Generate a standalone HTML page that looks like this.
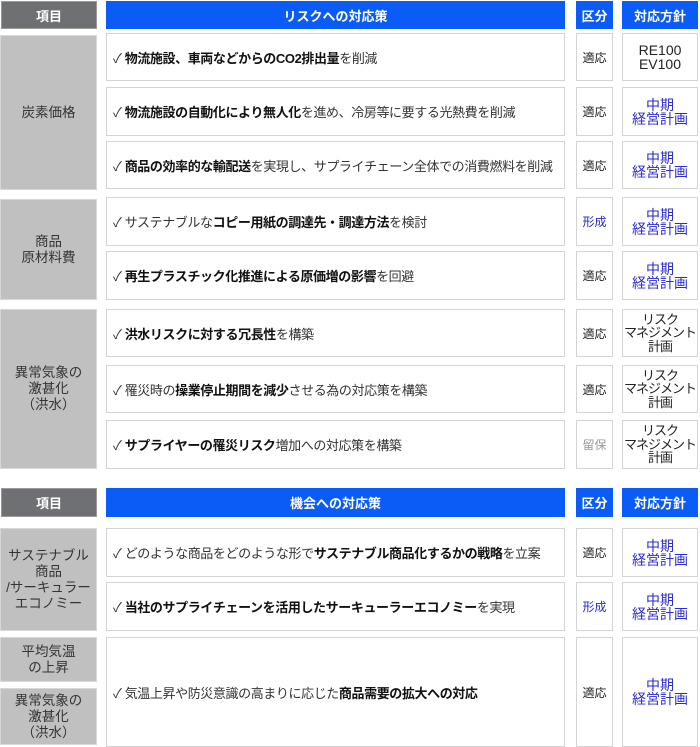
<!DOCTYPE html>
<html><head><meta charset="utf-8"><style>
body{margin:0;width:700px;height:745px;background:#fff;position:relative;overflow:hidden;font-family:"Liberation Sans","Noto Sans CJK JP",sans-serif;}
.b{position:absolute;box-sizing:border-box;display:flex;align-items:center;justify-content:center;text-align:center;}
.hg{background:#6f7073;color:#fff;font-weight:bold;font-size:13px;border:1px solid #9a9a9a;}
.hb{background:#0b5cf7;color:#fff;font-weight:bold;font-size:13px;}
.lg{background:#c0c0c0;border:1px solid #d8d8d8;color:#333;font-size:13.5px;line-height:16px;}
.w{background:#fff;border:1.5px solid #d4d4d4;font-size:13px;color:#333;}
.t{justify-content:flex-start;text-align:left;padding-left:6px;white-space:nowrap;letter-spacing:-0.4px;}
.t b{color:#111;}
.s{font-size:12px;color:#222;}
.p{font-size:14px;line-height:14px;color:#222;white-space:nowrap;}
.r{font-size:13px;line-height:13.5px;letter-spacing:-1px;}
.bl{color:#2a2ad0;}
.gr{color:#999;}
</style></head><body>
<div class="b hg" style="left:1px;top:1px;width:96px;height:28px">項目</div>
<div class="b hb" style="left:106px;top:1px;width:459px;height:28px">リスクへの対応策</div>
<div class="b hb" style="left:576px;top:1px;width:37px;height:28px">区分</div>
<div class="b hb" style="left:622px;top:1px;width:76px;height:28px">対応方針</div>

<div class="b lg" style="left:0;top:35px;width:97px;height:155px">炭素価格</div>
<div class="b w t" style="left:106px;top:33px;width:459px;height:48px">✓&nbsp;<b>物流施設、車両などからのCO2排出量</b>を削減</div>
<div class="b w t" style="left:106px;top:87px;width:459px;height:49px">✓&nbsp;<b>物流施設の自動化により無人化</b>を進め、冷房等に要する光熱費を削減</div>
<div class="b w t" style="left:106px;top:141px;width:459px;height:48px">✓&nbsp;<b>商品の効率的な輸配送</b>を実現し、サプライチェーン全体での消費燃料を削減</div>
<div class="b w s" style="left:576px;top:33px;width:37px;height:48px">適応</div>
<div class="b w s" style="left:576px;top:87px;width:37px;height:49px">適応</div>
<div class="b w s" style="left:576px;top:141px;width:37px;height:48px">適応</div>
<div class="b w p" style="left:622px;top:33px;width:76px;height:48px">RE100<br>EV100</div>
<div class="b w p bl" style="left:622px;top:87px;width:76px;height:49px">中期<br>経営計画</div>
<div class="b w p bl" style="left:622px;top:141px;width:76px;height:48px">中期<br>経営計画</div>

<div class="b lg" style="left:0;top:199px;width:97px;height:101px">商品<br>原材料費</div>
<div class="b w t" style="left:106px;top:197px;width:459px;height:49px">✓&nbsp;サステナブルな<b>コピー用紙の調達先・調達方法</b>を検討</div>
<div class="b w t" style="left:106px;top:251px;width:459px;height:49px">✓&nbsp;<b>再生プラスチック化推進による原価増の影響</b>を回避</div>
<div class="b w s bl" style="left:576px;top:197px;width:37px;height:49px">形成</div>
<div class="b w s" style="left:576px;top:251px;width:37px;height:49px">適応</div>
<div class="b w p bl" style="left:622px;top:197px;width:76px;height:49px">中期<br>経営計画</div>
<div class="b w p bl" style="left:622px;top:251px;width:76px;height:49px">中期<br>経営計画</div>

<div class="b lg" style="left:0;top:309px;width:97px;height:160px">異常気象の<br>激甚化<br>（洪水）</div>
<div class="b w t" style="left:106px;top:309px;width:459px;height:48px">✓&nbsp;<b>洪水リスクに対する冗長性</b>を構築</div>
<div class="b w t" style="left:106px;top:365px;width:459px;height:48px">✓&nbsp;罹災時の<b>操業停止期間を減少</b>させる為の対応策を構築</div>
<div class="b w t" style="left:106px;top:420px;width:459px;height:49px">✓&nbsp;<b>サプライヤーの罹災リスク</b>増加への対応策を構築</div>
<div class="b w s" style="left:576px;top:309px;width:37px;height:48px">適応</div>
<div class="b w s" style="left:576px;top:365px;width:37px;height:48px">適応</div>
<div class="b w s gr" style="left:576px;top:420px;width:37px;height:49px">留保</div>
<div class="b w p r" style="left:622px;top:309px;width:76px;height:48px">リスク<br>マネジメント<br>計画</div>
<div class="b w p r" style="left:622px;top:365px;width:76px;height:48px">リスク<br>マネジメント<br>計画</div>
<div class="b w p r" style="left:622px;top:420px;width:76px;height:49px">リスク<br>マネジメント<br>計画</div>

<div class="b hg" style="left:1px;top:488px;width:96px;height:29px">項目</div>
<div class="b hb" style="left:106px;top:488px;width:459px;height:29px">機会への対応策</div>
<div class="b hb" style="left:576px;top:488px;width:37px;height:29px">区分</div>
<div class="b hb" style="left:622px;top:488px;width:76px;height:29px">対応方針</div>

<div class="b lg" style="left:0;top:528px;width:97px;height:103px">サステナブル<br>商品<br>/サーキュラー<br>エコノミー</div>
<div class="b w t" style="left:106px;top:528px;width:459px;height:49px">✓&nbsp;どのような商品をどのような形で<b>サステナブル商品化するかの戦略</b>を立案</div>
<div class="b w t" style="left:106px;top:582px;width:459px;height:49px">✓&nbsp;<b>当社のサプライチェーンを活用したサーキューラーエコノミー</b>を実現</div>
<div class="b w s" style="left:576px;top:528px;width:37px;height:49px">適応</div>
<div class="b w s bl" style="left:576px;top:582px;width:37px;height:49px">形成</div>
<div class="b w p bl" style="left:622px;top:528px;width:76px;height:49px">中期<br>経営計画</div>
<div class="b w p bl" style="left:622px;top:582px;width:76px;height:49px">中期<br>経営計画</div>

<div class="b lg" style="left:0;top:637px;width:97px;height:45px">平均気温<br>の上昇</div>
<div class="b lg" style="left:0;top:688px;width:97px;height:57px">異常気象の<br>激甚化<br>（洪水）</div>
<div class="b w t" style="left:106px;top:637px;width:459px;height:110px">✓&nbsp;気温上昇や防災意識の高まりに応じた<b>商品需要の拡大への対応</b></div>
<div class="b w s" style="left:576px;top:637px;width:37px;height:110px">適応</div>
<div class="b w p bl" style="left:622px;top:637px;width:76px;height:110px">中期<br>経営計画</div>
</body></html>
